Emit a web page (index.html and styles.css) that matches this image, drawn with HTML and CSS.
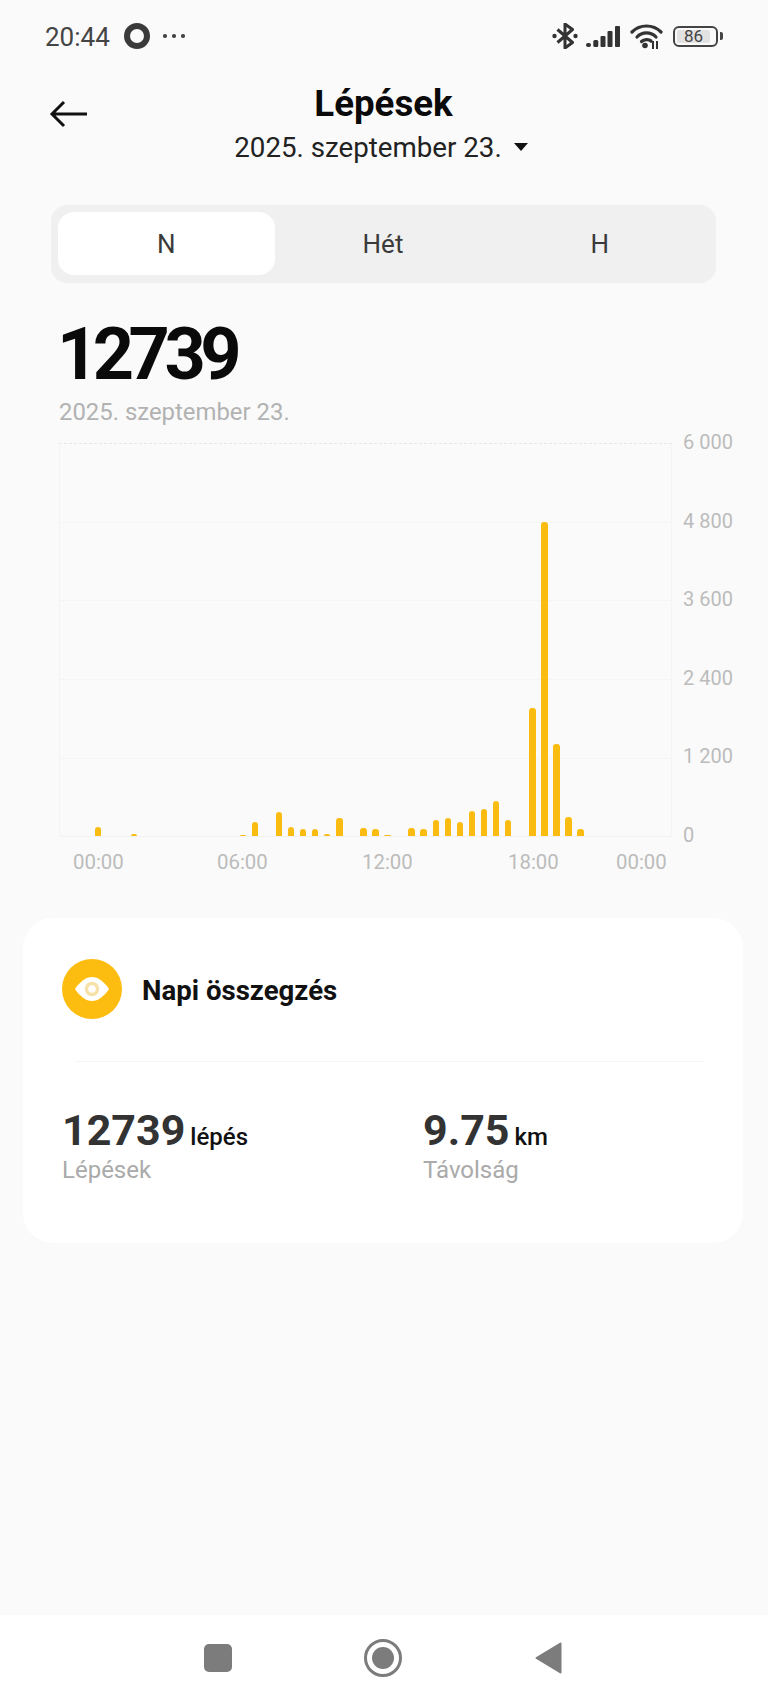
FILE: index.html
```html
<!DOCTYPE html>
<html lang="hu">
<head>
<meta charset="utf-8">
<title>Lépések</title>
<link rel="stylesheet" href="styles.css">
</head>
<body>
<div class="screen">
  <div class="status">
    <div class="status-left">
      <span class="time">20:44</span>
      <span class="ring"></span>
      <span class="dots"><i></i><i></i><i></i></span>
    </div>
    <div class="status-right">
      <svg class="ic-bt" width="26" height="26" viewBox="0 0 26 26"><path d="M5.500 6.500 20.500 19.500 13 25V1l7.500 5.500L5.500 19.500" fill="none" stroke="#333" stroke-width="3" stroke-linejoin="round"/><circle cx="2.500" cy="13" r="2.200" fill="#333"/><circle cx="23.500" cy="13" r="2.200" fill="#333"/></svg>
      <svg class="ic-signal" width="34" height="21" viewBox="0 0 34 21"><g fill="#333"><rect x="0" y="17" width="5" height="4" rx="2"/><rect x="7.300" y="14" width="5" height="7" rx="1.500"/><rect x="14.500" y="10" width="5" height="11" rx="1"/><rect x="21.500" y="5" width="5" height="16" rx="1"/><rect x="29" y="0" width="5" height="21" rx="1"/></g></svg>
      <svg class="ic-wifi" width="33" height="26" viewBox="0 0 33 26"><g fill="none" stroke="#333" stroke-width="3.200" stroke-linecap="round"><path d="M2 9C10 1 23 1 31 9"/><path d="M7 14C12 8.500 21 8.500 26 14"/><path d="M11.500 18.500C14 16 19 16 21 18"/></g><circle cx="15" cy="22.500" r="2.800" fill="#333"/><path d="M23 18v8M27 18v8" stroke="#333" stroke-width="2"/></svg>
      <div class="battery"><div class="battery-body"><span class="battery-fill"></span><span class="battery-num">86</span></div><span class="battery-nub"></span></div>
    </div>
  </div>

  <header class="head">
    <svg class="back" width="40" height="28" viewBox="0 0 40 28"><path d="M38 14H3M15 2 3 14l12 12" fill="none" stroke="#111" stroke-width="3"/></svg>
    <div class="head-center">
      <h1 class="title">Lépések</h1>
      <div class="subtitle"><span>2025. szeptember 23.</span><span class="caret"></span></div>
    </div>
  </header>

  <div class="tabs">
    <div class="tab tab-on">N</div>
    <div class="tab">Hét</div>
    <div class="tab">H</div>
  </div>

  <div class="big">12739</div>
  <div class="big-date">2025. szeptember 23.</div>

  <div class="chart">
    <div class="plot">
      <span class="bar" style="height:9.500px"></span><span class="bar"></span><span class="bar"></span><span class="bar" style="height:2.500px"></span>
      <span class="bar"></span><span class="bar"></span><span class="bar"></span><span class="bar"></span>
      <span class="bar"></span><span class="bar"></span><span class="bar"></span><span class="bar"></span>
      <span class="bar" style="height:1.500px"></span><span class="bar" style="height:14px"></span><span class="bar"></span><span class="bar" style="height:24px"></span>
      <span class="bar" style="height:9.500px"></span><span class="bar" style="height:7px"></span><span class="bar" style="height:7px"></span><span class="bar" style="height:2.500px"></span>
      <span class="bar" style="height:18px"></span><span class="bar"></span><span class="bar" style="height:8.500px"></span><span class="bar" style="height:7px"></span>
      <span class="bar" style="height:1.500px"></span><span class="bar"></span><span class="bar" style="height:8px"></span><span class="bar" style="height:7px"></span>
      <span class="bar" style="height:16px"></span><span class="bar" style="height:18px"></span><span class="bar" style="height:14.500px"></span><span class="bar" style="height:25px"></span>
      <span class="bar" style="height:27px"></span><span class="bar" style="height:35px"></span><span class="bar" style="height:16px"></span><span class="bar"></span>
      <span class="bar" style="height:128px"></span><span class="bar" style="height:314px"></span><span class="bar" style="height:92px"></span><span class="bar" style="height:19px"></span>
      <span class="bar" style="height:7.500px"></span><span class="bar"></span><span class="bar"></span><span class="bar"></span>
      <span class="bar"></span><span class="bar"></span><span class="bar"></span><span class="bar"></span>
    </div>
    <div class="y-axis">
      <span>6 000</span><span>4 800</span><span>3 600</span><span>2 400</span><span>1 200</span><span>0</span>
    </div>
    <div class="x-axis">
      <span>00:00</span><span>06:00</span><span>12:00</span><span>18:00</span><span>00:00</span>
    </div>
  </div>

  <section class="card">
    <div class="card-head">
      <svg width="60" height="60" viewBox="0 0 60 60"><circle cx="30" cy="30" r="30" fill="#fcbc10"/><path d="M13 30C18 22.500 24 18 30 18s12 4.500 17 12c-5 7.500-11 12-17 12S18 37.500 13 30Z" fill="#fff"/><circle cx="30" cy="30" r="5.500" fill="none" stroke="#f6e2a8" stroke-width="3.500"/></svg>
      <h2 class="card-title">Napi összegzés</h2>
    </div>
    <div class="divider"></div>
    <div class="stats">
      <div class="stat">
        <div class="stat-value"><span class="num">12739</span><span class="unit">lépés</span></div>
        <div class="stat-label">Lépések</div>
      </div>
      <div class="stat">
        <div class="stat-value"><span class="num">9.75</span><span class="unit">km</span></div>
        <div class="stat-label">Távolság</div>
      </div>
    </div>
  </section>

  <div class="spacer"></div>

  <nav class="nav">
    <span class="nav-square"></span>
    <span class="nav-home"><span class="nav-dot"></span></span>
    <svg width="27" height="32" viewBox="0 0 27 32"><path d="M25.500 1.500V30.500L1.500 16Z" fill="#7c7c7c" stroke="#7c7c7c" stroke-width="2" stroke-linejoin="round"/></svg>
  </nav>
</div>
</body>
</html>
```
FILE: styles.css
```css
* { box-sizing: border-box; }
html, body { margin: 0; padding: 0; }
body { font-family: Roboto, "Liberation Sans", sans-serif; background: #fafafa; }
.screen { width: 768px; height: 1707px; display: flex; flex-direction: column; background: #fafafa; overflow: hidden; }

.status { height: 72px; flex: none; display: flex; align-items: center; justify-content: space-between; padding: 0 45px 0 45px; }
.status-left { display: flex; align-items: center; }
.time { font-size: 26px; line-height: 30px; padding-top: 1px; color: #444; width: 79px; }
.ring { width: 26px; height: 26px; border: 6px solid #3a3a3a; border-radius: 50%; }
.dots { display: flex; gap: 5.500px; margin-left: 13px; }
.dots i { width: 3.500px; height: 3.500px; border-radius: 50%; background: #444; display: block; }
.status-right { display: flex; align-items: center; }
.ic-signal { margin-left: 8px; }
.ic-wifi { margin-left: 10px; }
.battery { display: flex; align-items: center; margin-left: 10px; }
.battery-body { width: 45px; height: 21px; border: 2px solid #444; border-radius: 6px; padding: 2px; position: relative; display: flex; }
.battery-fill { width: 33px; background: #e2e2e2; border-radius: 2px; }
.battery-num { position: absolute; left: 0; right: 0; top: 0; bottom: 0; text-align: center; font-size: 17px; line-height: 17px; color: #444; padding-right: 4px; }
.battery-nub { width: 3px; height: 8px; background: #444; border-radius: 0 2px 2px 0; margin-left: 2px; }

.head { height: 133px; flex: none; display: grid; grid-template-columns: 1fr auto 1fr; padding-left: 49px; padding-right: 50px; }
.back { grid-column: 1; margin-top: 28px; }
.head-center { grid-column: 2; display: flex; flex-direction: column; align-items: center; }
.title { margin: 11px 0 0; font-size: 36.700px; line-height: 42px; font-weight: 700; color: #0a0a0a; }
.subtitle { display: flex; align-items: center; margin: 6px 5px 0 0; font-size: 27.700px; line-height: 34px; color: #222; }
.caret { width: 0; height: 0; margin-left: 12px; margin-top: -2px; border-left: 7px solid transparent; border-right: 7px solid transparent; border-top: 8px solid #111; }

.tabs { flex: none; margin: 0 51px; width: 665px; height: 78px; padding: 7px 8px 8px 7px; display: grid; grid-template-columns: repeat(3, 1fr); background: #f0f0f0; border-radius: 16px; }
.tab { display: flex; align-items: center; justify-content: center; font-size: 26px; color: #3a3a3a; border-radius: 16px; }
.tab-on { background: #fff; }

.big { flex: none; margin: 30px 0 0 57px; font-size: 72px; line-height: 84px; font-weight: 700; color: #0a0a0a; letter-spacing: -5.500px; }
.big-date { flex: none; margin: 1px 0 0 59px; font-size: 23.900px; line-height: 28px; color: #b2b2b2; }

.chart { flex: none; margin: 17px 0 0 59px; display: grid; grid-template-columns: 613px 1fr; column-gap: 11px; width: 700px; }
.plot { height: 394px; display: grid; grid-template-columns: repeat(48, 1fr); align-items: end; padding-left: 32px; border-left: 1px solid #f4f4f4; border-right: 1px solid #f4f4f4; border-top: 1px dashed #e6e6e6; border-bottom: 1px solid #f2f2f2; background: repeating-linear-gradient(to bottom, transparent 0, transparent 77.700px, #f5f5f5 77.700px, #f5f5f5 78.700px); }
.bar { display: block; width: 6.500px; margin: 0 auto; background: #fbbc12; border-radius: 3px 3px 0 0; }
.y-axis { margin: -12px 0 -9px; display: flex; flex-direction: column; justify-content: space-between; font-size: 20px; line-height: 22px; color: #bcbcbc; }
.x-axis { grid-column: 1; display: grid; grid-template-columns: 144px 145px 146px 108px auto; padding-left: 14px; margin-top: 13px; font-size: 20.400px; line-height: 24px; color: #bcbcbc; }

.card { flex: none; margin: 44px 0 0 23px; width: 720px; height: 325px; background: #fff; border-radius: 30px; }
.card-head { display: flex; align-items: center; padding: 41px 0 0 39px; }
.card-title { margin: 3px 0 0 20px; font-size: 27.600px; line-height: 32px; font-weight: 700; color: #111; }
.divider { height: 1px; background: #f5f5f5; margin: 42px 38px 0 52px; }
.stats { display: grid; grid-template-columns: 361px 1fr; padding: 43px 0 0 39px; }
.stat-value { display: flex; align-items: baseline; color: #333; }
.num { font-size: 43px; line-height: 50px; font-weight: 700; }
.unit { margin-left: 5px; font-size: 24px; font-weight: 500; color: #111; }
.stat-label { margin-top: 1px; font-size: 24px; line-height: 28px; color: #aaa; }

.spacer { flex: 1; }
.nav { flex: none; height: 92px; background: #fff; display: flex; align-items: center; padding: 0 0 6px 204px; }
.nav-square { width: 28px; height: 28px; background: #7c7c7c; border-radius: 5px; }
.nav-home { width: 38px; height: 38px; margin-left: 132px; border: 3px solid #7c7c7c; border-radius: 50%; display: flex; align-items: center; justify-content: center; }
.nav-dot { width: 22px; height: 22px; border-radius: 50%; background: #7c7c7c; }
.nav svg { margin-left: 133px; }
```
